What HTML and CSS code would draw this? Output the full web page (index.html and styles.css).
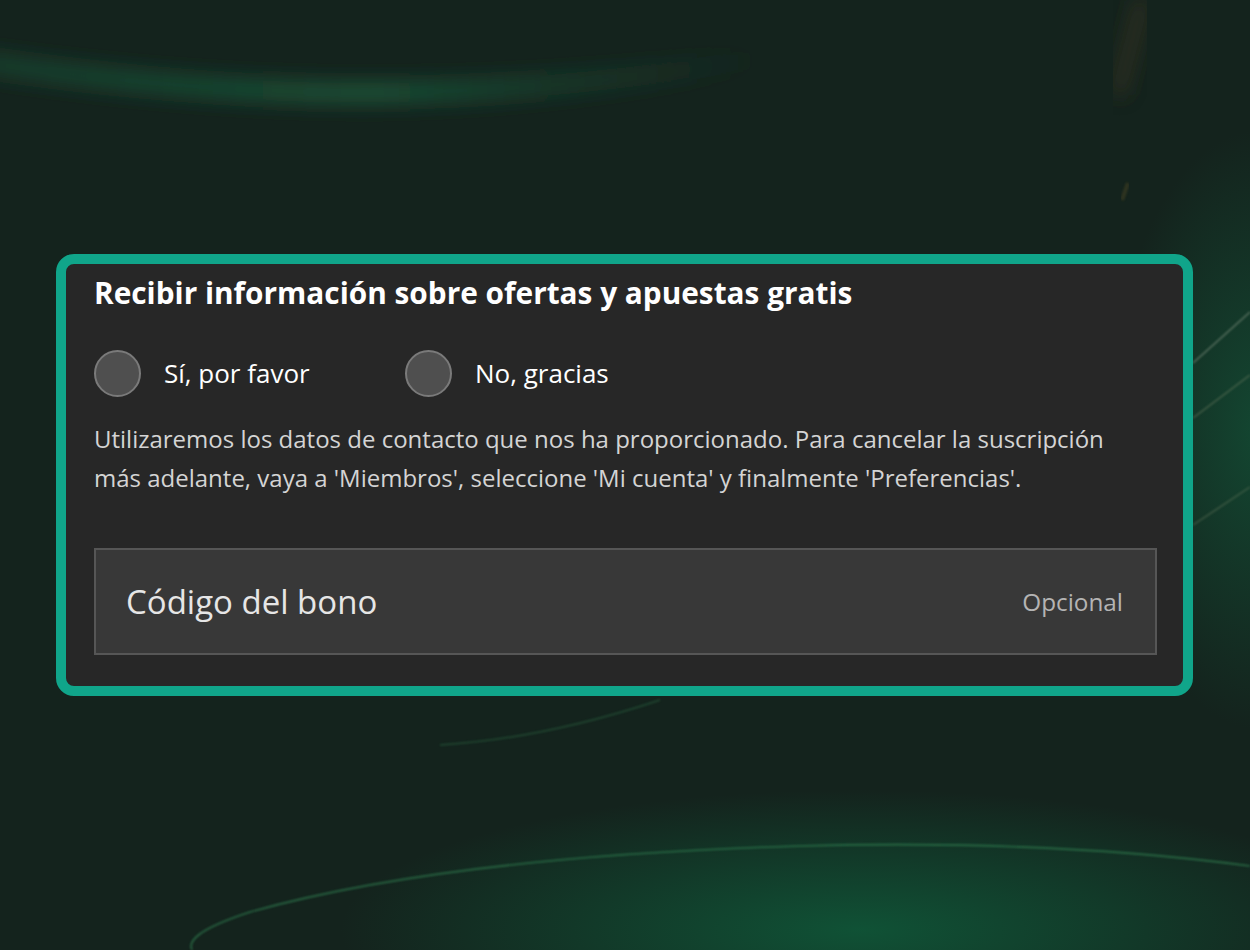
FILE: index.html
```html
<!DOCTYPE html>
<html lang="es">
<head>
<meta charset="utf-8">
<link rel="stylesheet" href="styles.css">
</head>
<body>
<svg class="bg" width="1250" height="950" viewBox="0 0 1250 950" aria-hidden="true">
  <defs>
    <radialGradient id="glowB" cx="0.5" cy="0.5" r="0.5">
      <stop offset="0" stop-color="#0f5a3a" stop-opacity="0.85"/>
      <stop offset="1" stop-color="#0f5a3a" stop-opacity="0"/>
    </radialGradient>
    <radialGradient id="glowR" cx="0.5" cy="0.5" r="0.5">
      <stop offset="0" stop-color="#13563a" stop-opacity="0.7"/>
      <stop offset="1" stop-color="#13563a" stop-opacity="0"/>
    </radialGradient>
    <linearGradient id="arcFade" x1="0" y1="0" x2="1" y2="0">
      <stop offset="0" stop-color="#1c5238" stop-opacity="0.6"/>
      <stop offset="0.5" stop-color="#1d5a3c" stop-opacity="0.9"/>
      <stop offset="1" stop-color="#1c5238" stop-opacity="0"/>
    </linearGradient>
    <filter id="blur8" x="-20%" y="-200%" width="140%" height="500%"><feGaussianBlur stdDeviation="10"/></filter>
    <filter id="blur2"><feGaussianBlur stdDeviation="1.2"/></filter>
  </defs>
  <ellipse cx="860" cy="930" rx="520" ry="140" fill="url(#glowB)"/>
  <ellipse cx="1260" cy="430" rx="150" ry="300" fill="url(#glowR)"/>
  <path d="M-20 62 C 200 95, 450 112, 760 58" stroke="url(#arcFade)" stroke-width="20" fill="none" filter="url(#blur8)"/>
  <path d="M1142 0 C 1136 30, 1126 60, 1118 95" stroke="#3c3620" stroke-width="12" fill="none" filter="url(#blur8)" opacity="0.8"/>
  <path d="M1128 183 L1122 200" stroke="#4a4424" stroke-width="4" fill="none" filter="url(#blur2)" opacity="0.5"/>
  <path d="M1250 866 C 1100 846, 950 842, 800 846 C 600 852, 400 870, 250 912 C 195 930, 188 942, 192 950" stroke="#2f7a4e" stroke-width="1.6" fill="none" filter="url(#blur2)" opacity="0.8"/>
  <path d="M660 700 C 600 720, 520 740, 440 745" stroke="#2c6a44" stroke-width="1.5" fill="none" filter="url(#blur2)" opacity="0.55"/>
  <path d="M1193 363 L1250 312" stroke="#7a8c7a" stroke-width="1.5" fill="none" filter="url(#blur2)" opacity="0.7"/>
  <path d="M1193 418 L1250 375" stroke="#6c7c60" stroke-width="1.5" fill="none" filter="url(#blur2)" opacity="0.6"/>
  <path d="M1193 525 L1250 487" stroke="#6c7c60" stroke-width="1.5" fill="none" filter="url(#blur2)" opacity="0.5"/>
</svg>
<main class="page">
  <section class="card">
    <h2 class="title">Recibir información sobre ofertas y apuestas gratis</h2>
    <div class="radios">
      <label class="radio"><span class="dot"></span><span class="radio-label">Sí, por favor</span></label>
      <label class="radio"><span class="dot"></span><span class="radio-label">No, gracias</span></label>
    </div>
    <p class="note">Utilizaremos los datos de contacto que nos ha proporcionado. Para cancelar la suscripción más adelante, vaya a 'Miembros', seleccione 'Mi cuenta' y finalmente 'Preferencias'.</p>
    <div class="field">
      <span class="placeholder">Código del bono</span>
      <span class="optional">Opcional</span>
    </div>
  </section>
</main>
</body>
</html>
```
FILE: styles.css
```css
html, body {
  margin: 0;
  padding: 0;
}
body {
  width: 1250px;
  height: 950px;
  overflow: hidden;
  background: #14231d;
  font-family: "Open Sans", "Noto Sans", sans-serif;
  color: #fff;
  position: relative;
}
.bg {
  position: absolute;
  left: 0;
  top: 0;
  z-index: 0;
}
.page {
  position: relative;
  z-index: 1;
  padding: 254px 57px 0 56px;
}
.card {
  box-sizing: border-box;
  height: 442px;
  border: 10px solid #10a58a;
  border-radius: 18px;
  background: #272727;
  padding: 11px 26px 0 28px;
}
.title {
  margin: 0;
  font-size: 29.8px;
  font-weight: 700;
  line-height: 36px;
  color: #fff;
}
.radios {
  display: flex;
  margin-top: 38px;
  height: 48px;
  align-items: center;
}
.radio {
  display: flex;
  align-items: center;
  width: 311px;
}
.dot {
  box-sizing: border-box;
  width: 47px;
  height: 47px;
  border-radius: 50%;
  background: #4f4f4f;
  border: 2px solid #7a7a7a;
  flex: none;
}
.radio-label {
  margin-left: 23px;
  font-size: 26px;
  color: #fff;
}
.note {
  margin: 22px 0 0;
  max-width: 1040px;
  font-size: 24px;
  line-height: 39px;
  color: #d4d4d4;
}
.field {
  box-sizing: border-box;
  margin-top: 51px;
  height: 107px;
  background: #383838;
  border: 2px solid #565656;
  display: flex;
  align-items: center;
  justify-content: space-between;
  padding: 0 32px 0 30px;
}
.placeholder {
  font-size: 33px;
  color: #e6e6e6;
}
.optional {
  font-size: 24.3px;
  color: #b4b4b4;
}
```
